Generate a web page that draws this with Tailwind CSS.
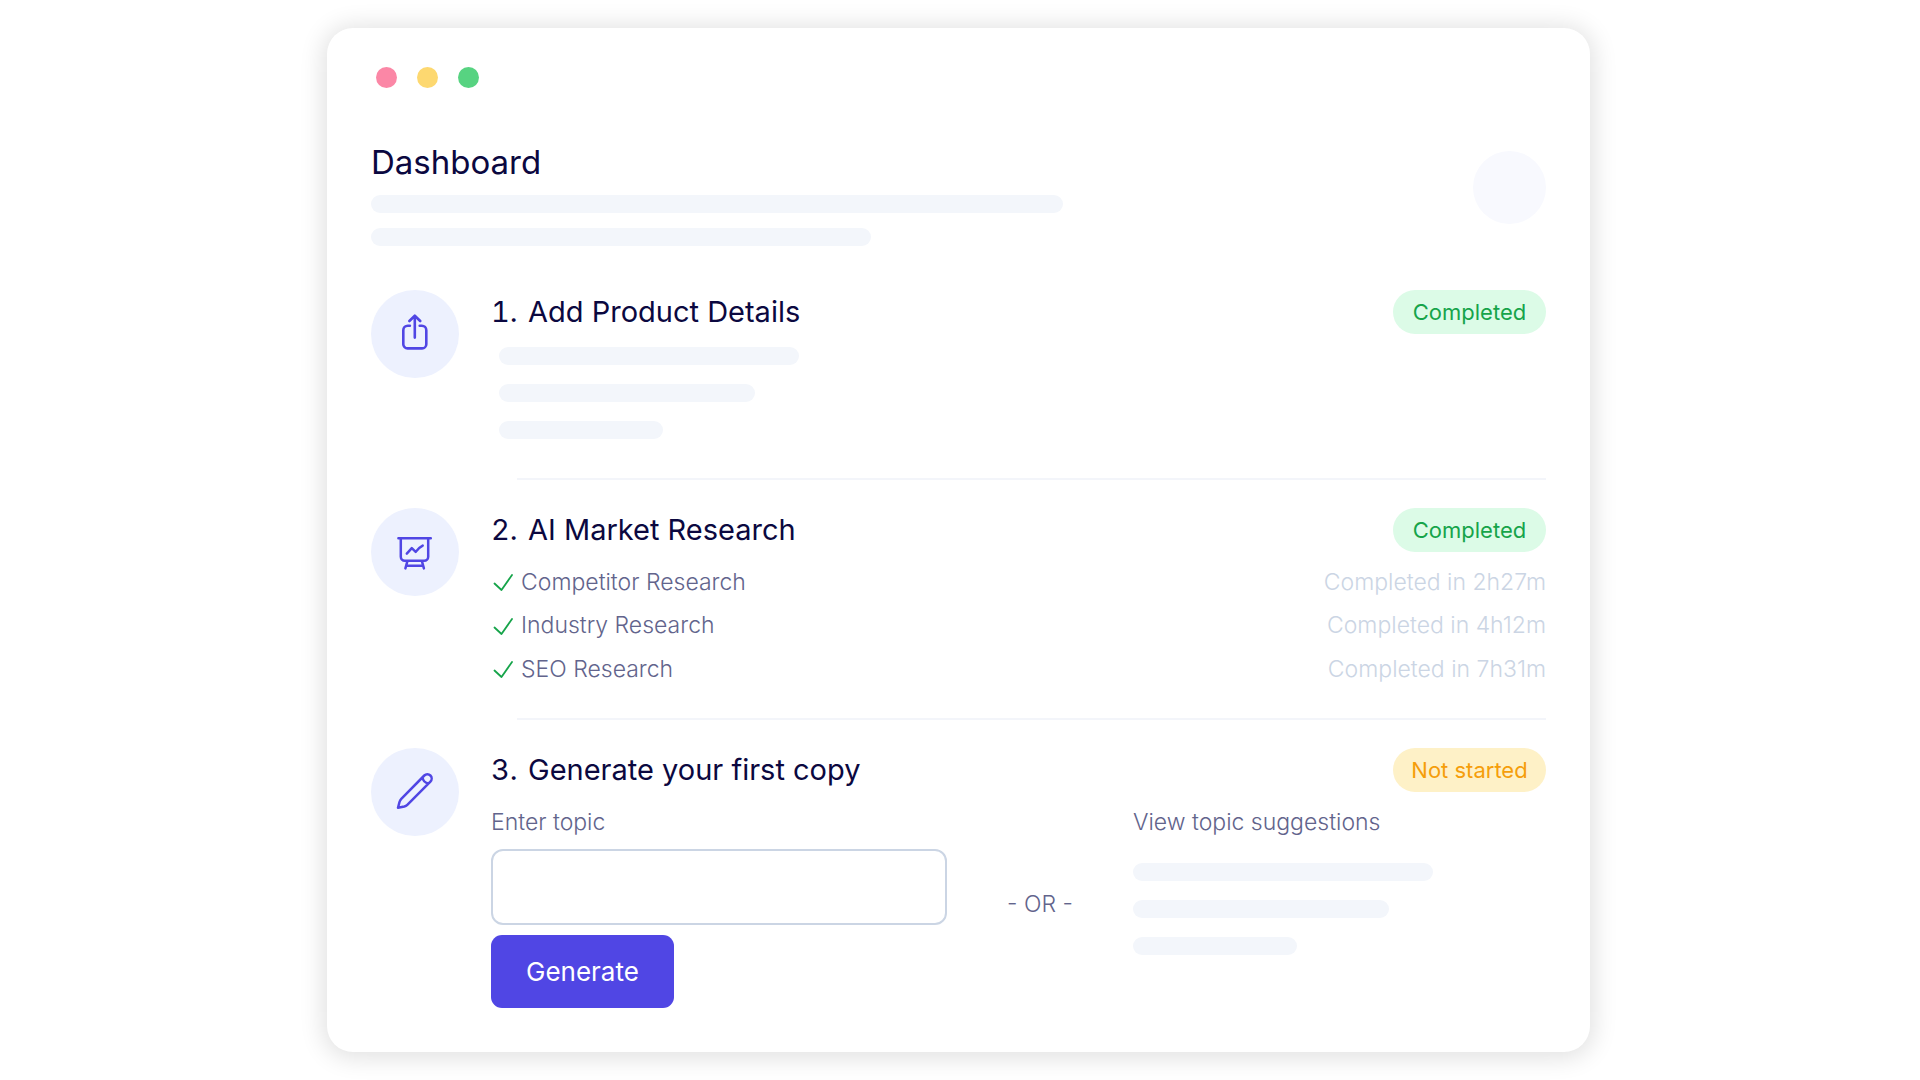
<!DOCTYPE html>
<html lang="en">
<head>
<meta charset="utf-8">
<meta name="viewport" content="width=device-width, initial-scale=1">
<title>Dashboard</title>
<script src="https://cdn.jsdelivr.net/npm/@tailwindcss/browser@4"></script>
</head>
<body class="bg-white font-['Inter',sans-serif] text-[#0b0840]">
<main class="pt-7 pb-[29px] pl-6 pr-[27px]">
  <div class="mx-auto w-full max-w-[1263px] rounded-[26px] bg-white px-11 pt-[39px] pb-11 shadow-[0_2px_24px_4px_rgba(0,0,0,0.12)]">
    <div class="flex gap-5 pl-[5px]" aria-hidden="true">
      <span class="size-[21px] rounded-full bg-[#fb87a6]"></span>
      <span class="size-[21px] rounded-full bg-[#fdd870]"></span>
      <span class="size-[21px] rounded-full bg-[#57d381]"></span>
    </div>

    <header class="mt-[54px] flex items-start justify-between">
      <div class="grow">
        <h1 class="text-[33px] leading-10">Dashboard</h1>
        <div class="mt-[13px] h-[18px] w-full max-w-[692px] rounded-full bg-[#f3f6fb]"></div>
        <div class="mt-[15px] h-[18px] w-full max-w-[500px] rounded-full bg-[#f3f6fb]"></div>
      </div>
      <div class="mt-[9px] size-[73px] shrink-0 rounded-full bg-[#f8f9fe]"></div>
    </header>

    <section class="mt-11 flex gap-8">
      <div class="flex size-[88px] shrink-0 items-center justify-center rounded-full bg-[#edf1fe] text-[#5046e4]">
        <svg class="size-10" viewBox="0 0 40 40" fill="none" stroke="currentColor" stroke-width="2.6" stroke-linecap="round" stroke-linejoin="round" aria-hidden="true"><path d="M14.900 11.700h-2.100a4.500 4.500 0 0 0-4.500 4.500v14a4.200 4.200 0 0 0 4.200 4.200h14.600a4.200 4.200 0 0 0 4.200-4.200v-14a4.500 4.500 0 0 0-4.500-4.500h-2.100M19.800 23.600V1.800M14.400 7 19.800 1.700 25.200 7"/></svg>
      </div>
      <div class="grow">
        <div class="flex h-11 items-center justify-between">
          <h2 class="flex text-[29px] leading-9"><span class="w-[37px] shrink-0 tabular-nums">1.</span> Add Product Details</h2>
          <span class="flex h-11 w-[153px] shrink-0 items-center justify-center rounded-full bg-[#dcfbe7] text-[22px] text-[#16a44a]">Completed</span>
        </div>
        <div class="mt-[13px] ml-2 grid gap-[19px]">
          <div class="h-[18px] max-w-[300px] rounded-full bg-[#f3f6fb]"></div>
          <div class="h-[18px] max-w-[256px] rounded-full bg-[#f3f6fb]"></div>
          <div class="h-[18px] max-w-[164px] rounded-full bg-[#f3f6fb]"></div>
        </div>
        <div class="mt-[39px] ml-[26px] h-[2px] bg-[#f3f5fa]"></div>
      </div>
    </section>

    <section class="mt-7 flex gap-8">
      <div class="flex size-[88px] shrink-0 items-center justify-center rounded-full bg-[#edf1fe] text-[#5046e4]">
        <svg class="size-10" viewBox="0 0 40 40" fill="none" stroke="currentColor" stroke-width="2.500" stroke-linecap="round" stroke-linejoin="round" aria-hidden="true"><path d="M3.400 6.200h32.400M5.800 6.200v18.600a4 4 0 0 0 4 4h19.400a4 4 0 0 0 4-4V6.200M12.400 29.200l-2 7.200M26.900 29.200l2 7.200M11.600 33.700h16M11.800 21.600l5-5.400 3.900 3.700q2.800-4.200 7-6.300"/></svg>
      </div>
      <div class="grow">
        <div class="flex h-11 items-center justify-between">
          <h2 class="flex text-[29px] leading-9"><span class="w-[37px] shrink-0 tabular-nums">2.</span> AI Market Research</h2>
          <span class="flex h-11 w-[153px] shrink-0 items-center justify-center rounded-full bg-[#dcfbe7] text-[22px] text-[#16a44a]">Completed</span>
        </div>
        <ul class="mt-2 text-[23px] font-light text-[#62648c]">
          <li class="flex h-[44px] items-center gap-2">
            <svg class="size-[22px]" viewBox="0 0 22 22" fill="none" stroke="#16a44a" stroke-width="1.800" stroke-linecap="round" stroke-linejoin="round" aria-hidden="true"><path d="M3.500 12.500 10.500 19 21 4"/></svg>
            <span class="grow">Competitor Research</span><span class="text-[#cbd5e4]">Completed in 2h27m</span>
          </li>
          <li class="flex h-[43px] items-center gap-2">
            <svg class="size-[22px]" viewBox="0 0 22 22" fill="none" stroke="#16a44a" stroke-width="1.800" stroke-linecap="round" stroke-linejoin="round" aria-hidden="true"><path d="M3.500 12.500 10.500 19 21 4"/></svg>
            <span class="grow">Industry Research</span><span class="text-[#cbd5e4]">Completed in 4h12m</span>
          </li>
          <li class="flex h-[44px] items-center gap-2">
            <svg class="size-[22px]" viewBox="0 0 22 22" fill="none" stroke="#16a44a" stroke-width="1.800" stroke-linecap="round" stroke-linejoin="round" aria-hidden="true"><path d="M3.500 12.500 10.500 19 21 4"/></svg>
            <span class="grow">SEO Research</span><span class="text-[#cbd5e4]">Completed in 7h31m</span>
          </li>
        </ul>
        <div class="mt-[27px] ml-[26px] h-[2px] bg-[#f3f5fa]"></div>
      </div>
    </section>

    <section class="mt-7 flex gap-8">
      <div class="flex size-[88px] shrink-0 items-center justify-center rounded-full bg-[#edf1fe] text-[#5046e4]">
        <svg class="size-10" viewBox="0 0 40 40" fill="none" stroke="currentColor" stroke-width="2.500" stroke-linecap="round" stroke-linejoin="round" aria-hidden="true"><path d="M3 35.800 4.500 30Q5 28.200 6.300 26.900L29.300 3.500a4.300 4.300 0 0 1 6.100 6.100L12.300 32.800Q11 34.100 9.300 34.500ZM27.500 5.400Q28.300 10.700 33.500 11.500"/></svg>
      </div>
      <div class="grow">
        <div class="flex h-11 items-center justify-between">
          <h2 class="flex text-[29px] leading-9"><span class="w-[37px] shrink-0 tabular-nums">3.</span> Generate your first copy</h2>
          <span class="flex h-11 w-[153px] shrink-0 items-center justify-center rounded-full bg-[#fef1c7] text-[22px] text-[#f59e0b]">Not started</span>
        </div>
        <div class="mt-3 flex text-[23px] font-light text-[#62648c]">
          <form class="max-w-[456px] grow">
            <label for="topic" class="block leading-9">Enter topic</label>
            <input id="topic" type="text" class="mt-[9px] block h-[76px] w-full rounded-xl border-2 border-[#cbd5e4] bg-white px-5">
            <button type="button" class="mt-[10px] h-[73px] rounded-[11px] bg-[#5046e4] px-[35px] text-[26px] font-normal text-white">Generate</button>
          </form>
          <p class="mt-[82px] w-[186px] shrink-0 text-center leading-9">- OR -</p>
          <div class="grow">
            <p class="leading-9">View topic suggestions</p>
            <div class="mt-[23px] grid gap-[19px]">
              <div class="h-[18px] max-w-[300px] rounded-full bg-[#f3f6fb]"></div>
              <div class="h-[18px] max-w-[256px] rounded-full bg-[#f3f6fb]"></div>
              <div class="h-[18px] max-w-[164px] rounded-full bg-[#f3f6fb]"></div>
            </div>
          </div>
        </div>
      </div>
    </section>
  </div>
</main>
</body>
</html>
